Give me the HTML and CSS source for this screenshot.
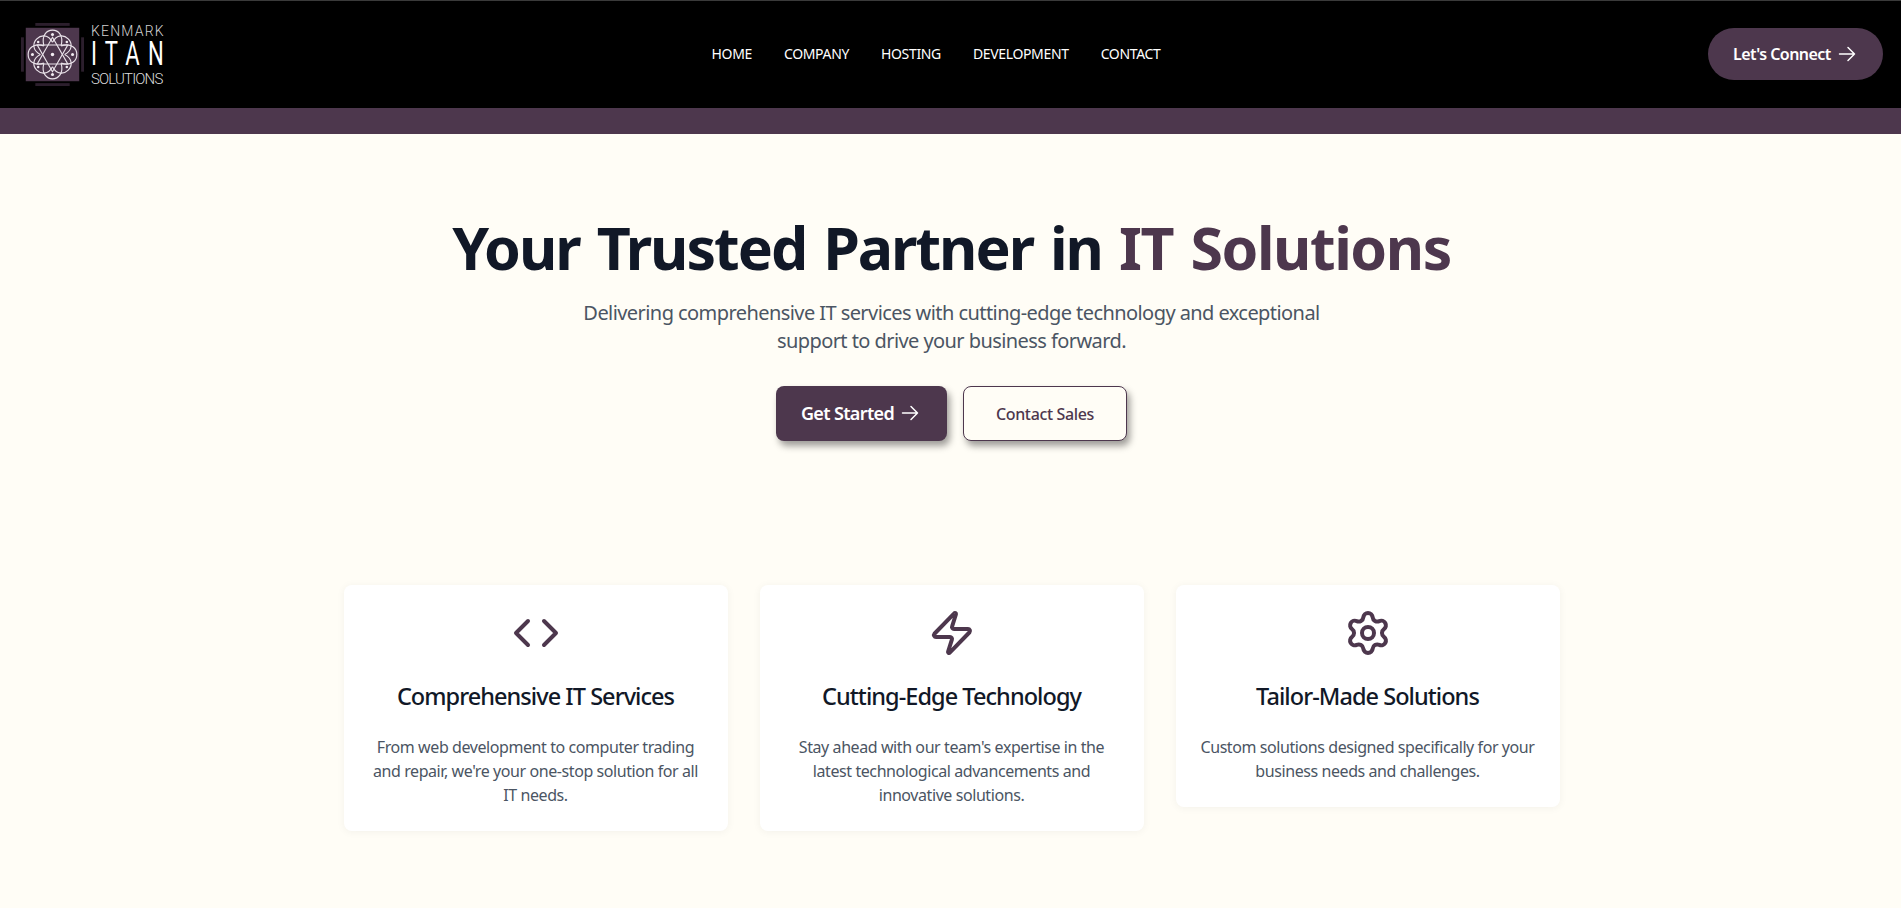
FILE: index.html
```html
<!DOCTYPE html>
<html lang="en">
<head>
<meta charset="utf-8">
<title>Kenmark ITAN Solutions</title>
<link rel="stylesheet" href="styles.css">
</head>
<body>
<header class="site-header">
  <a class="brand" href="#">
    <svg class="brand-mark" viewBox="0 0 66 66" aria-hidden="true">
      <g fill="#2c1f2d">
        <rect x="15" y="0" width="36" height="3"/><rect x="15" y="63" width="36" height="3"/>
        <rect x="0" y="15" width="3" height="36"/><rect x="63" y="15" width="3" height="36"/>
      </g>
      <rect x="5" y="5" width="56" height="56" fill="#4d374d"/>
      <g fill="none" stroke="#e9e2e9" stroke-width="1.2">
        <path d="M-9-9C-15-31 15-31 9-9" transform="translate(33 33)"/>
        <path d="M-9-9C-15-28 15-28 9-9" transform="translate(33 33) rotate(45)"/>
        <path d="M-9-9C-16-31 16-31 9-9" transform="translate(33 33) rotate(90)"/>
        <path d="M-9-9C-15-28 15-28 9-9" transform="translate(33 33) rotate(135)"/>
        <path d="M-9-9C-15-31 15-31 9-9" transform="translate(33 33) rotate(180)"/>
        <path d="M-9-9C-15-28 15-28 9-9" transform="translate(33 33) rotate(225)"/>
        <path d="M-9-9C-16-31 16-31 9-9" transform="translate(33 33) rotate(270)"/>
        <path d="M-9-9C-15-28 15-28 9-9" transform="translate(33 33) rotate(315)"/>
        <path d="M33 15 49 43H17z"/>
        <path d="M33 51 17 23H49z"/>
      </g>
      <g fill="#f2edf2">
        <circle cx="33" cy="33" r="1.8"/><circle cx="33" cy="12" r="1.6"/><circle cx="33" cy="54" r="1.6"/>
        <circle cx="12" cy="33" r="1.6"/><circle cx="54" cy="33" r="1.6"/><circle cx="18" cy="20" r="1.3"/>
        <circle cx="48" cy="20" r="1.3"/><circle cx="18" cy="46" r="1.3"/><circle cx="48" cy="46" r="1.3"/>
      </g>
    </svg>
    <span class="brand-text">
      <span class="brand-top">KENMARK</span>
      <span class="brand-main">ITAN</span>
      <span class="brand-bottom">SOLUTIONS</span>
    </span>
  </a>
  <nav class="main-nav">
    <a href="#">HOME</a>
    <a href="#">COMPANY</a>
    <a href="#">HOSTING</a>
    <a href="#">DEVELOPMENT</a>
    <a href="#">CONTACT</a>
  </nav>
  <a class="connect-btn" href="#">Let's Connect
    <svg class="arrow" viewBox="0 0 24 24" aria-hidden="true"><path d="M4.500 12h15M13 5.500l6.500 6.500-6.500 6.500"/></svg>
  </a>
</header>
<div class="band"></div>
<main class="page">
  <section class="hero">
    <h1>Your Trusted Partner in <span class="accent">IT Solutions</span></h1>
    <p class="lead">Delivering comprehensive IT services with cutting-edge technology and exceptional support to drive your business forward.</p>
    <div class="cta-row">
      <a class="btn btn-primary" href="#">Get Started
        <svg class="arrow" viewBox="0 0 24 24" aria-hidden="true"><path d="M4.500 12h15M13 5.500l6.500 6.500-6.500 6.500"/></svg>
      </a>
      <a class="btn btn-outline" href="#">Contact Sales</a>
    </div>
  </section>
  <section class="cards">
    <article class="card">
      <svg class="card-icon" viewBox="0 0 24 24" aria-hidden="true"><path d="m16 18 6-6-6-6"/><path d="m8 6-6 6 6 6"/></svg>
      <h3>Comprehensive IT Services</h3>
      <p>From web development to computer trading and repair, we're your one-stop solution for all IT needs.</p>
    </article>
    <article class="card">
      <svg class="card-icon" viewBox="0 0 24 24" aria-hidden="true"><path d="M4 14a1 1 0 0 1-.78-1.630l9.900-10.200a.5.5 0 0 1 .86.460l-1.920 6.020A1 1 0 0 0 13 10h7a1 1 0 0 1 .78 1.630l-9.900 10.200a.5.5 0 0 1-.86-.460l1.920-6.020A1 1 0 0 0 11 14z"/></svg>
      <h3>Cutting-Edge Technology</h3>
      <p>Stay ahead with our team's expertise in the latest technological advancements and innovative solutions.</p>
    </article>
    <article class="card">
      <svg class="card-icon" viewBox="0 0 24 24" aria-hidden="true"><path d="M9.671 4.136a2.340 2.340 0 0 1 4.659 0 2.340 2.340 0 0 0 3.319 1.915 2.340 2.340 0 0 1 2.330 4.033 2.340 2.340 0 0 0 0 3.831 2.340 2.340 0 0 1-2.330 4.033 2.340 2.340 0 0 0-3.319 1.915 2.340 2.340 0 0 1-4.659 0 2.340 2.340 0 0 0-3.320-1.915 2.340 2.340 0 0 1-2.330-4.033 2.340 2.340 0 0 0 0-3.831A2.340 2.340 0 0 1 6.350 6.051a2.340 2.340 0 0 0 3.319-1.915"/><circle cx="12" cy="12" r="3"/></svg>
      <h3>Tailor-Made Solutions</h3>
      <p>Custom solutions designed specifically for your business needs and challenges.</p>
    </article>
  </section>
</main>
</body>
</html>
```
FILE: styles.css
```css
* { box-sizing: border-box; }
html, body { margin: 0; padding: 0; }
body {
  font-family: "Noto Sans", "Open Sans", sans-serif;
  background: #fffdf6;
  color: #111827;
  height: 908px;
  overflow: hidden;
}
a { text-decoration: none; color: inherit; }

.site-header {
  height: 108px;
  background: #000;
  border-top: 1px solid #3a3a3a;
  padding: 0 18px 1px 21px;
  display: flex;
  justify-content: space-between;
  align-items: center;
}
.band { height: 26px; background: #4d374d; }

.brand { display: flex; align-items: center; gap: 7px; width: 143px; }
.brand-mark { width: 63px; height: 63px; flex: none; }
.brand-text { display: flex; flex-direction: column; width: 73px; padding-top: 4px; color: #fff; font-family: Roboto, sans-serif; font-weight: 300; white-space: nowrap; }
.brand-top { font-size: 14px; line-height: 12px; letter-spacing: 1.2px; color: #d0d0d0; }
.brand-main { margin: 3px 0; font-size: 32.500px; line-height: 28px; letter-spacing: 12px; font-weight: 400; transform: scaleX(.68); transform-origin: left center; }
.brand-bottom { font-size: 15px; line-height: 16px; letter-spacing: -0.85px; color: #dcdcdc; }

.main-nav { display: flex; gap: 32px; padding-bottom: 2px; font-size: 14px; color: #fff; letter-spacing: -0.35px; }
.connect-btn {
  display: flex;
  align-items: center;
  gap: 4px;
  width: 175px;
  height: 52px;
  padding: 0 24px 0 25px;
  border-radius: 26px;
  background: #4d374d;
  color: #fff;
  font-size: 16px;
  font-weight: 600;
  letter-spacing: -0.55px;
  white-space: nowrap;
}
.arrow { width: 24px; height: 24px; fill: none; stroke: currentColor; stroke-width: 1.500; stroke-linecap: round; stroke-linejoin: round; flex: none; }

.page { padding-left: 2px; }
.hero { padding-top: 77px; text-align: center; }
.hero h1 {
  margin: 0;
  font-size: 59px;
  line-height: 72px;
  font-weight: 700;
  color: #111827;
  letter-spacing: -2px;
  word-spacing: 3.600px;
}
.accent { color: #4d374d; letter-spacing: -1.450px; }
.lead {
  width: 768px;
  margin: 16px auto 0;
  font-size: 20px;
  line-height: 28px;
  color: #4b5563;
  letter-spacing: -0.57px;
}
.cta-row { display: flex; justify-content: center; gap: 16px; margin-top: 31px; }
.btn {
  display: flex;
  align-items: center;
  justify-content: center;
  height: 55px;
  border-radius: 8px;
  box-shadow: 3px 5px 7px rgba(0,0,0,.38);
}
.btn-primary { width: 171px; gap: 4px; padding-bottom: 2px; background: #4d374d; color: #fff; font-size: 18px; font-weight: 600; letter-spacing: -0.65px; }
.btn-outline { width: 164px; background: #fffdf6; border: 1px solid #4d374d; color: #4d374d; font-size: 16px; font-weight: 500; letter-spacing: -0.35px; }

.cards {
  width: 1216px;
  margin: 144px auto 0;
  display: grid;
  grid-template-columns: repeat(3, 1fr);
  gap: 32px;
  align-items: start;
}
.card {
  background: #fff;
  border-radius: 8px;
  padding: 24px;
  text-align: center;
  box-shadow: 0 1px 8px rgba(0,0,0,.05);
}
.card-icon { display: block; width: 48px; height: 48px; margin: 0 auto 23px; fill: none; stroke: #4d374d; stroke-width: 2; stroke-linecap: round; stroke-linejoin: round; }
.card h3 { margin: 0 0 23px; font-size: 23.500px; line-height: 32px; font-weight: 500; color: #111827; letter-spacing: -0.95px; }
.card p { margin: 0; font-size: 16px; line-height: 24px; color: #4b5563; letter-spacing: -0.42px; }
```
